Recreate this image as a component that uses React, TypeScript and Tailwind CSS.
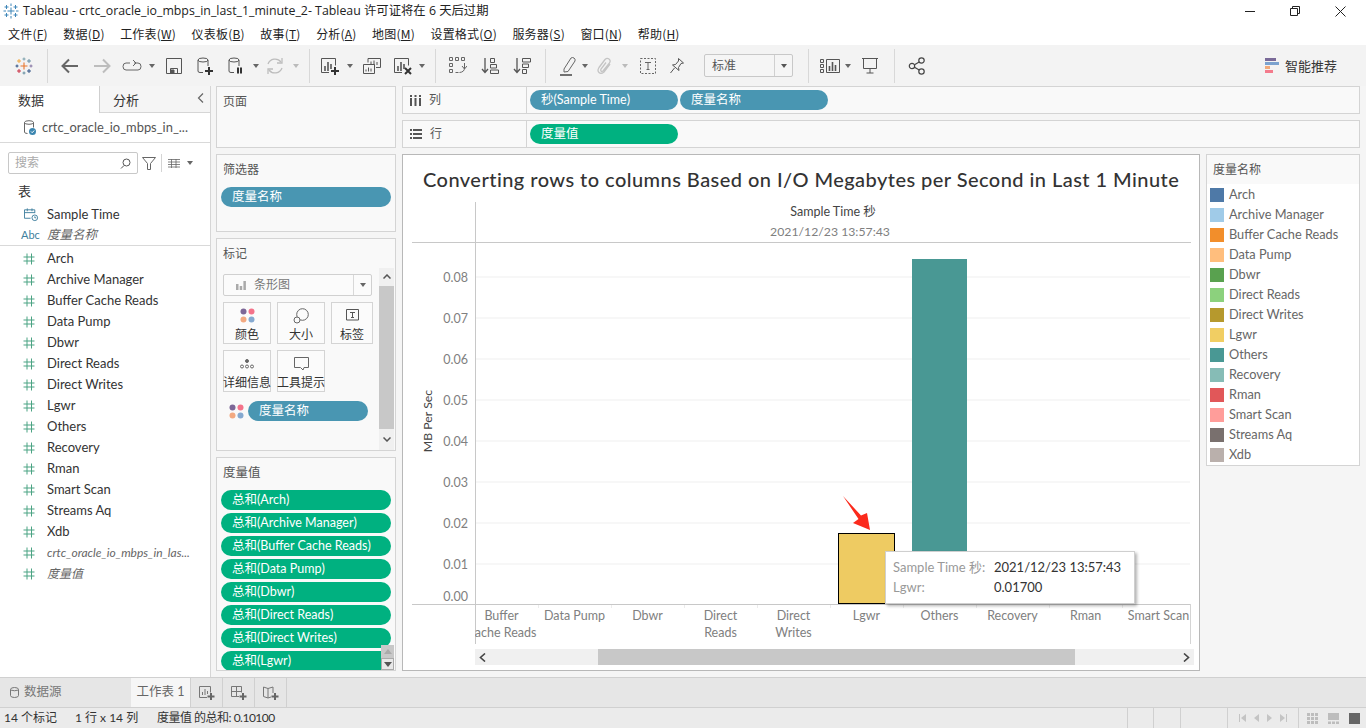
import React from "react";

const Caret = ({ c = "#666", className = "" }: { c?: string; className?: string }) => (
  <svg width="6" height="4" viewBox="0 0 6 4" className={className}><path d="M0 0h6L3 4z" fill={c} /></svg>
);
const Sep = ({ className = "" }: { className?: string }) => <div className={"w-px h-[34px] bg-[#d8d8d8] " + className} />;

const Plus = ({ x, y, c = "#333" }: { x: number; y: number; c?: string }) => (
  <path d={`M${x - 4} ${y}h8M${x} ${y - 4}v8`} stroke={c} strokeWidth="2" fill="none" />
);

const Logo = () => (
  <svg width="18" height="18" viewBox="0 0 18 18" fill="none" strokeWidth=".9">
    <path d="M9 5.500v7M5.500 9h7" stroke="#e8762d" strokeWidth="1.100" />
    <path d="M4 2v4M2 4h4" stroke="#f0a030" />
    <path d="M14 2v4M12 4h4" stroke="#5b879b" />
    <path d="M4 12v4M2 14h4" stroke="#c72035" />
    <path d="M14 12v4M12 14h4" stroke="#1f457e" />
    <path d="M9 .5v3M7.500 2h3" stroke="#7099a6" />
    <path d="M9 14.500v3M7.500 16h3" stroke="#59879b" />
    <path d="M.5 9h3M2 7.500v3" stroke="#1f447e" />
    <path d="M14.500 9h3M16 7.500v3" stroke="#7c6a9c" />
  </svg>
);

const TitleIcon = () => (
  <svg width="16" height="16" viewBox="0 0 16 16" fill="none" stroke="#3f86b8" strokeWidth="1">
    <path d="M8 4.500v7M4.500 8h7M3.500 2v4M1.500 4h4M12.500 2v4M10.500 4h4M3.500 10v4M1.500 12h4M12.500 10v4M10.500 12h4M8 .5v2.500M8 13v2.500M.5 8h2.500M13 8h2.500" />
  </svg>
);

const Ds = ({ extra }: { extra: React.ReactNode }) => (
  <svg width="18" height="18" viewBox="0 0 18 18" fill="none" stroke="#555" strokeWidth="1">
    <ellipse cx="7" cy="3" rx="5" ry="2" />
    <path d="M2 3v11q0 1.500 2 1.500h3M12 3v6" />
    {extra}
  </svg>
);

const Chart = ({ extra, w = 20 }: { extra: React.ReactNode; w?: number }) => (
  <svg width={w} height="18" viewBox={`0 0 ${w} 18`} fill="none" stroke="#555" strokeWidth="1">
    <path d="M9 15.500H1.500v-14h14v7" />
    <path d="M5 14V9M8 14V5M11 12V7" strokeWidth="1.600" />
    {extra}
  </svg>
);

const SheetPlusIcon = ({ kind }: { kind: "sheet" | "dash" | "story" }) => (
  <svg width="16" height="16" viewBox="0 0 16 16" fill="none" stroke="#777" strokeWidth="1">
    {kind === "sheet" && <path d="M8 12.500H.5v-11h11v6M3.500 10V7M6 10V4M8.500 9V6" />}
    {kind === "dash" && <path d="M8 11.500H.5v-10h10v6M5.500 1.500v10M.5 6.500h10" />}
    {kind === "story" && <path d="M8 12L5 13 .5 11.500V2L5 3.500 10 2v6M5 3.500V13" />}
    <path d="M12 8v7M8.500 11.500h7" stroke="#666" strokeWidth="2" />
  </svg>
);

const Toolbar = () => (
  <div className="h-[41px] bg-[#f3f3f3] flex items-center shrink-0">
    <div className="w-[47px] flex justify-center"><Logo /></div>
    <Sep />
    <svg className="ml-[12px]" width="20" height="18" viewBox="0 0 20 18" fill="none" stroke="#666" strokeWidth="2"><path d="M18 9H3M9 2.500L2.500 9 9 15.500" /></svg>
    <svg className="ml-[12px]" width="20" height="18" viewBox="0 0 20 18" fill="none" stroke="#bdbdbd" strokeWidth="2"><path d="M2 9h15M11 2.500L17.500 9 11 15.500" /></svg>
    <svg className="ml-[10px]" width="20" height="14" viewBox="0 0 20 14" fill="none" stroke="#666" strokeWidth="1"><path d="M8 4H4q-3 0-3 3.500T4 11h12q3 0 3-3.500T16 4h-4" /><path d="M11 1l3 3-3 3" /></svg>
    <Caret className="ml-[7px]" />
    <svg className="ml-[11px]" width="16" height="16" viewBox="0 0 16 16" fill="none" stroke="#555"><path d="M.5.5h15v15H.5zM4.500 15.500v-5h7v5" /><path d="M5 12h3v3H5z" fill="#555" /></svg>
    <div className="ml-[14px]"><Ds extra={<Plus x={13} y={14} />} /></div>
    <div className="ml-[13px]"><Ds extra={<path d="M11 10.500v6M14 10.500v6" stroke="#333" strokeWidth="2" />} /></div>
    <Caret className="ml-[8px]" />
    <svg className="ml-[7px]" width="18" height="18" viewBox="0 0 18 18" fill="none" stroke="#bdbdbd" strokeWidth="1.300"><path d="M2 7a7.500 7.500 0 0 1 13-2M16 11a7.500 7.500 0 0 1-13 2" /><path d="M16 1v5h-5M2 17v-5h5" /></svg>
    <Caret c="#bbb" className="ml-[9px]" />
    <Sep className="ml-[10px]" />
    <div className="ml-[10px]"><Chart extra={<Plus x={15} y={14} />} /></div>
    <Caret className="ml-[7px]" />
    <svg className="ml-[10px]" width="18" height="16" viewBox="0 0 18 16" fill="none" stroke="#555"><path d="M5 4.500V.5h12.500v9H13M.5 6.500h11v9H.5zM8 7V3.500M11 7V2.500M14 7V4M3 13.500v-2M5.500 13.500v-4M8 13.500v-3" /></svg>
    <div className="ml-[12px]"><Chart extra={<path d="M12 11l6 6M18 11l-6 6" stroke="#333" strokeWidth="2" />} /></div>
    <Caret className="ml-[6px]" />
    <Sep className="ml-[10px]" />
    <svg className="ml-[13px]" width="18" height="18" viewBox="0 0 18 18" fill="none" stroke="#666"><path d="M.5.5h3v3h-3zM6.500.5h3v3h-3zM12.500.5h3v3h-3zM.5 6.500h3v3h-3zM.5 12.500h3v3h-3zM6.500 15.500h3M15.500 6v5q0 4-5 4.500" /><path d="M13 9l2.500 3L18 9" /></svg>
    <svg className="ml-[14px]" width="18" height="18" viewBox="0 0 18 18" fill="none" stroke="#555"><path d="M4 1v14M1 12l3 3.500L7 12" strokeWidth="1.300" /><path d="M9.500 1.500h4v4h-4zM9.500 7.500h6v3.500h-6zM9.500 13h8v3.500h-8z" /></svg>
    <svg className="ml-[14px]" width="18" height="18" viewBox="0 0 18 18" fill="none" stroke="#555"><path d="M4 1v14M1 12l3 3.500L7 12" strokeWidth="1.300" /><path d="M9.500 1.500h8v3.500h-8zM9.500 7h6v3.500h-6zM9.500 12.500h4v4h-4z" /></svg>
    <Sep className="ml-[14px]" />
    <svg className="ml-[13px]" width="18" height="20" viewBox="0 0 18 20" fill="none" stroke="#666"><path d="M5 13l7-11q1.500-1 3 0t1 3L9 15.500 5 16z" /><path d="M1 19h12" strokeWidth="1.500" stroke="#444" /></svg>
    <Caret className="ml-[5px]" />
    <svg className="ml-[9px]" width="16" height="18" viewBox="0 0 16 18" fill="none" stroke="#c4c4c4" strokeWidth="1.300"><path d="M13 7l-6 8q-3 2.500-5 .5t0-5l6-8q2-2 4-.5t.5 4L6 14q-1.500 1-2 0t0-2l5-6.500" /></svg>
    <Caret c="#bbb" className="ml-[9px]" />
    <svg className="ml-[12px]" width="16" height="16" viewBox="0 0 16 16" fill="none" stroke="#666"><path d="M.5.5h15v15H.5z" strokeDasharray="2 1.500" /><path d="M5 4.500h6M8 4.500v7M6.500 11.500h3" /></svg>
    <svg className="ml-[13px]" width="16" height="17" viewBox="0 0 16 17" fill="none" stroke="#555"><path d="M9.500 1.500l5 4.500-2.500.5-2.500 4 .5 3-6.500-5.500 3-.5 3-3.500zM5.500 11l-4 5" /></svg>
    <div className="ml-[19px] w-[89px] h-[23px] bg-[#f5f5f5] border border-[#c8c8c8] rounded-[2px] flex items-center text-[12px] text-[#555]">
      <span className="pl-[7px] pt-[1px] flex-1">标准</span>
      <span className="w-[18px] h-full border-l border-[#d0d0d0] flex items-center justify-center"><Caret c="#555" /></span>
    </div>
    <Sep className="ml-[15px]" />
    <svg className="ml-[11px]" width="20" height="16" viewBox="0 0 20 16" fill="none" stroke="#555"><path d="M.5 1.500h3v3h-3zM.5 6.500h3v3h-3zM.5 11.500h3v3h-3zM6.500 1.500h13v13h-13z" /><path d="M9.500 13V8M12.500 13V4M15.500 13V7" strokeWidth="1.600" /></svg>
    <Caret className="ml-[5px]" />
    <svg className="ml-[10px]" width="18" height="17" viewBox="0 0 18 17" fill="none" stroke="#555"><path d="M1 1.500h16M2.500 1.500v10h13v-10M9 11.500v4.500M5.500 16h7" /></svg>
    <Sep className="ml-[15px]" />
    <svg className="ml-[13px]" width="18" height="18" viewBox="0 0 18 18" fill="none" stroke="#444" strokeWidth="1.200"><circle cx="13.500" cy="3.500" r="2.700" /><circle cx="13.500" cy="14.500" r="2.700" /><circle cx="4" cy="9" r="2.700" /><path d="M6.500 7.700l4.700-2.800M6.500 10.300l4.700 2.800" /></svg>
    <div className="ml-auto mr-[29px] flex items-center gap-[6px] text-[13px] text-[#333]">
      <svg width="14" height="15" viewBox="0 0 14 15"><path d="M0 0h11v3H0z" fill="#7a6a98" /><path d="M0 4h14v3H0z" fill="#7ba2cf" /><path d="M0 8h5v3H0z" fill="#f1a97a" /><path d="M0 12h8v3H0z" fill="#f47b8c" /></svg>
      <span className="pt-[2px]">智能推荐</span>
    </div>
  </div>
);

const Hash = () => (
  <svg width="12" height="12" viewBox="0 0 12 12" fill="none" stroke="#4ba383"><path d="M4 .5v11M8.500.5v11M.5 4h11M.5 8h11" /></svg>
);

const fields = ["Arch", "Archive Manager", "Buffer Cache Reads", "Data Pump", "Dbwr", "Direct Reads", "Direct Writes", "Lgwr", "Others", "Recovery", "Rman", "Smart Scan", "Streams Aq", "Xdb"];

const LeftPanel = () => (
  <div className="w-[211px] shrink-0 bg-white border-r border-[#d6d6d6] text-[13px] text-[#333]">
    <div className="flex h-[27px] text-[13px]">
      <div className="w-[100px] border-r border-[#cfcfcf] bg-white pl-[18px] pt-[5px]">数据</div>
      <div className="flex-1 bg-[#f5f5f5] border-b border-[#d6d6d6] pl-[13px] pt-[5px] flex justify-between pr-[6px]">
        <span>分析</span>
        <svg className="mt-[2px]" width="7" height="10" viewBox="0 0 7 10" fill="none" stroke="#666" strokeWidth="1.200"><path d="M6 .5L1.500 5 6 9.500" /></svg>
      </div>
    </div>
    <div className="h-[30px] border-b border-[#d9d9d9] flex items-center pl-[23px] gap-[6px] text-[#555] text-[12.900px]">
      <svg width="13" height="15" viewBox="0 0 13 15"><g fill="none" stroke="#666"><ellipse cx="6" cy="2.500" rx="4.500" ry="1.800" /><path d="M1.500 2.500v9.500q0 1.500 3 1.500M10.500 2.500v5" /></g><circle cx="9.500" cy="11.500" r="3.500" fill="#3b86b0" /><path d="M8 11.500l1.200 1.200 2-2.200" stroke="#fff" fill="none" /></svg>
      <span>crtc_oracle_io_mbps_in_...</span>
    </div>
    <div className="flex items-center pt-[9px] pl-[8px]">
      <div className="w-[130px] h-[22px] border border-[#c8c8c8] rounded-[2px] flex items-center justify-between pl-[6px] pr-[6px] text-[#aaa] text-[12px]">
        <span>搜索</span>
        <svg width="11" height="11" viewBox="0 0 11 11" fill="none" stroke="#555"><circle cx="6.500" cy="4.500" r="3.500" /><path d="M4 7.500L1 10.500" /></svg>
      </div>
      <svg className="ml-[4px]" width="14" height="13" viewBox="0 0 14 13" fill="none" stroke="#666"><path d="M.5.5h13L8.500 6.500v6h-3v-6z" /></svg>
      <div className="w-px h-[18px] bg-[#d4d4d4] ml-[5px]" />
      <svg className="ml-[6px]" width="12" height="9" viewBox="0 0 12 9" fill="none" stroke="#666"><path d="M0 .5h12M0 3h12M0 5.500h12M0 8h12M3.500 0v9M8 0v9" strokeWidth=".8" /></svg>
      <Caret className="ml-[7px]" />
    </div>
    <div className="pl-[18px] pt-[8px] pb-[2px] h-[30px]">表</div>
    <div className="flex items-center h-[21px] pl-[24px]">
      <svg className="mr-[8px]" width="15" height="15" viewBox="0 0 16 15" fill="none" stroke="#3f7f9e"><path d="M7 11.500H.5v-9h11V6M.5 5.500h11M3.500 1v3M8.500 1v3" /><circle cx="11.500" cy="11" r="3" /><path d="M11.500 9.500V11h1.500" /></svg>
      <span>Sample Time</span>
    </div>
    <div className="flex items-center h-[21px] pl-[21px] border-b border-[#d9d9d9] ml-0">
      <span className="w-[26px] text-[11px] text-[#3f7f9e]">Abc</span>
      <span className="italic text-[#666] text-[12.500px]">度量名称</span>
    </div>
    <div className="pt-[2px]">
      {fields.map((f) => (
        <div key={f} className="flex items-center h-[21px] pl-[23px] gap-[12px]"><Hash /><span>{f}</span></div>
      ))}
      <div className="flex items-center h-[21px] pl-[23px] gap-[12px]"><Hash /><span className="italic text-[#666] text-[12px]">crtc_oracle_io_mbps_in_las...</span></div>
      <div className="flex items-center h-[21px] pl-[23px] gap-[12px]"><Hash /><span className="italic text-[#666] text-[12px]">度量值</span></div>
    </div>
  </div>
);

const Pill = ({ children, green, className = "" }: { children: React.ReactNode; green?: boolean; className?: string }) => (
  <div className={"h-[20px] rounded-full text-white text-[12.500px] leading-[20px] pl-[11px] whitespace-nowrap " + (green ? "bg-[#00b180] " : "bg-[#4996b2] ") + className}>{children}</div>
);

const Card = ({ children, className = "" }: { children: React.ReactNode; className?: string }) => (
  <div className={"bg-[#f9f9f9] border border-[#d4d4d4] " + className}>{children}</div>
);

const MarkBtn = ({ icon, label, w = "w-[48px]" }: { icon: React.ReactNode; label: string; w?: string }) => (
  <div className={w + " h-[42px] border border-[#d4d4d4] flex flex-col items-center justify-between pt-[5px] text-[12px] leading-[16px] text-[#333] whitespace-nowrap bg-[#fbfbfb]"}>
    <div className="h-[15px] flex items-center">{icon}</div>
    <span>{label}</span>
  </div>
);

const Dots = () => (
  <svg width="15" height="15" viewBox="0 0 15 15"><circle cx="3.500" cy="3.500" r="3" fill="#7d6797" /><circle cx="11.500" cy="3.500" r="3" fill="#f4738a" /><circle cx="3.500" cy="11.500" r="3" fill="#f2a981" /><circle cx="11.500" cy="11.500" r="3" fill="#85a9d0" /></svg>
);

const MiddlePanel = () => (
  <div className="w-[180px] ml-[5px] shrink-0 flex flex-col gap-[6px] text-[12px] text-[#555]">
    <Card className="h-[62px] pl-[6px] pt-[6px]">页面</Card>
    <Card className="h-[78px] px-[4px]">
      <div className="pl-[2px] pt-[6px] h-[32px]">筛选器</div>
      <Pill>度量名称</Pill>
    </Card>
    <Card className="h-[213px] flex flex-col">
      <div className="pl-[6px] pt-[6px] h-[29px] shrink-0">标记</div>
      <div className="flex flex-1">
        <div className="w-[162px] pl-[6px]">
          <div className="w-[149px] h-[22px] mt-[6px] border border-[#d0d0d0] rounded-[2px] bg-[#fbfbfb] flex items-center">
            <svg className="ml-[12px]" width="10" height="10" viewBox="0 0 10 10" fill="#aaa"><path d="M0 4h2.500v6H0zM3.700 6h2.500v4H3.700zM7.400 1h2.500v9H7.400z" /></svg>
            <span className="ml-[8px] flex-1 text-[#777]">条形图</span>
            <span className="w-[18px] h-full border-l border-[#d8d8d8] flex items-center justify-center"><Caret /></span>
          </div>
          <div className="flex gap-[6px] mt-[6px]">
            <MarkBtn label="颜色" icon={<Dots />} />
            <MarkBtn label="大小" icon={<svg width="16" height="16" viewBox="0 0 16 16" fill="none" stroke="#666"><circle cx="9.500" cy="6.500" r="5.800" /><circle cx="4" cy="12" r="3" fill="#fbfbfb" /></svg>} />
            <MarkBtn w="w-[42px]" label="标签" icon={<svg width="13" height="13" viewBox="0 0 13 13" fill="none" stroke="#555"><path d="M.5.5h12v10.500H.5zM4 3.500h5M6.500 3.500v5M5 8.500h3" /></svg>} />
          </div>
          <div className="flex gap-[6px] mt-[6px]">
            <MarkBtn label="详细信息" icon={<svg width="14" height="10" viewBox="0 0 14 10" fill="none" stroke="#666"><circle cx="7" cy="2" r="1.500" fill="#666" /><circle cx="2" cy="7.500" r="1.500" /><circle cx="7" cy="7.500" r="1.500" /><circle cx="12" cy="7.500" r="1.500" /></svg>} />
            <MarkBtn label="工具提示" icon={<svg width="15" height="14" viewBox="0 0 15 14" fill="none" stroke="#666"><path d="M.5.5h14v10H10L9 13l-2.500-2.500H.5z" /></svg>} />
          </div>
          <div className="flex items-center mt-[9px] pl-[6px] gap-[4px]">
            <Dots />
            <Pill className="w-[120px]">度量名称</Pill>
          </div>
        </div>
        <div className="w-[15px] mt-[0px] bg-[#f0f0f0] flex flex-col items-center justify-between">
          <div className="h-[17px] w-full flex items-center justify-center">
            <svg width="8" height="5" viewBox="0 0 8 5" fill="none" stroke="#555" strokeWidth="1.500"><path d="M.5 4.500L4 1l3.500 3.500" /></svg>
          </div>
          <div className="h-[143px] w-full bg-[#c8c8c8]" />
          <div className="h-[21px] w-full flex items-center justify-center">
            <svg width="8" height="5" viewBox="0 0 8 5" fill="none" stroke="#555" strokeWidth="1.500"><path d="M.5.5L4 4l3.500-3.500" /></svg>
          </div>
        </div>
      </div>
    </Card>
    <Card className="h-[214px] relative overflow-hidden px-[4px]">
      <div className="pl-[2px] pt-[6px] h-[32px] text-[12.500px]">度量值</div>
      <div className="flex flex-col gap-[3px]">
        {["Arch", "Archive Manager", "Buffer Cache Reads", "Data Pump", "Dbwr", "Direct Reads", "Direct Writes", "Lgwr"].map((n) => (
          <Pill green key={n}>总和({n})</Pill>
        ))}
      </div>
      <div className="absolute right-[1px] bottom-0 w-[13px] h-[25px] bg-[#c8c8c8] flex flex-col">
        <div className="h-[13px] flex items-center justify-center"><svg width="8" height="5" viewBox="0 0 8 5"><path d="M0 5h8L4 0z" fill="#aaa" /></svg></div>
        <div className="h-[12px] bg-[#e8e8e8] border border-[#aaa] flex items-center justify-center"><svg width="8" height="5" viewBox="0 0 8 5"><path d="M0 0h8L4 5z" fill="#555" /></svg></div>
      </div>
    </Card>
  </div>
);

const Shelf = ({ icon, label, children }: { icon: React.ReactNode; label: string; children: React.ReactNode }) => (
  <Card className="h-[28px] flex text-[12px] text-[#555]">
    <div className="w-[124px] border-r border-[#d4d4d4] flex items-center pl-[7px] gap-[8px]">{icon}<span>{label}</span></div>
    <div className="flex items-center pl-[3px] gap-[2px]">{children}</div>
  </Card>
);

const xLabels: [number, string, string?][] = [
  [501.5, "Buffer", "Cache Reads"], [574.5, "Data Pump"], [647.5, "Dbwr"], [720.5, "Direct", "Reads"], [793.5, "Direct", "Writes"],
  [866.5, "Lgwr"], [939.5, "Others"], [1012.5, "Recovery"], [1085.5, "Rman"], [1158.5, "Smart Scan"],
];
const yTicks: [number, string][] = [[277, "0.08"], [318, "0.07"], [359, "0.06"], [400, "0.05"], [441, "0.04"], [482, "0.03"], [523, "0.02"], [564, "0.01"]];

const Plot = () => (
  <svg width="796" height="442" viewBox="403 202 796 442" className="block" fontFamily="Lato, 'Noto Sans CJK SC', sans-serif" fontSize="12.5">
    <defs><clipPath id="xclip"><rect x="475" y="604" width="716" height="40" /></clipPath></defs>
    {yTicks.map(([y, t]) => (
      <g key={t}>
        <line x1="476" x2="1190" y1={y} y2={y} stroke="#efefef" />
        <text x="468" y={y + 4.500} textAnchor="end" fill="#808080">{t}</text>
      </g>
    ))}
    <text x="468" y="601" textAnchor="end" fill="#808080">0.00</text>
    <text transform="translate(432 421) rotate(-90)" textAnchor="middle" fill="#444" fontSize="12.3">MB Per Sec</text>
    <text x="833" y="216" textAnchor="middle" fill="#444" fontSize="12.5">Sample Time 秒</text>
    <text x="830" y="236" textAnchor="middle" fill="#808080" fontSize="12.25">2021/12/23 13:57:43</text>
    <rect x="912" y="259" width="55" height="345" fill="#499894" />
    <rect x="838.5" y="533.5" width="56" height="70" fill="#eecb62" stroke="#000" />
    <line x1="412" x2="1191" y1="242.500" y2="242.500" stroke="#c8c8c8" />
    <line x1="412" x2="1191" y1="604.500" y2="604.500" stroke="#c8c8c8" />
    <line x1="475.500" x2="475.500" y1="202" y2="644" stroke="#c8c8c8" />
    <line x1="1190.500" x2="1190.500" y1="604" y2="644" stroke="#d4d4d4" />
    {[538, 611, 684, 757, 830, 903, 976, 1049, 1122].map((x) => (
      <line key={x} x1={x + 0.5} x2={x + 0.5} y1="605" y2="608" stroke="#ececec" />
    ))}
    <g clipPath="url(#xclip)" fill="#808080">
      {xLabels.map(([x, a, b]) => (
        <g key={x}>
          <text x={x} y="620" textAnchor="middle">{a}</text>
          {b && <text x={x} y="637" textAnchor="middle">{b}</text>}
        </g>
      ))}
    </g>
  </svg>
);

const ChartCard = () => (
  <div className="relative w-[798px] h-[517px] bg-white border border-[#b8b8b8] shrink-0 overflow-hidden font-['Lato','Noto_Sans_CJK_SC',sans-serif]">
    <div className="h-[47px] pl-[20px] pt-[11px] text-[20px] leading-[26px] text-[#333] font-medium tracking-[0.45px] whitespace-nowrap">
      Converting rows to columns Based on I/O Megabytes per Second in Last 1 Minute
    </div>
    <Plot />
    <div className="mt-[5px] ml-[72px] w-[719px] h-[16px] bg-[#f0f0f0] flex items-center">
      <div className="w-[123px] pl-[4px] flex items-center">
        <svg width="7" height="9" viewBox="0 0 7 9" fill="none" stroke="#444" strokeWidth="1.600"><path d="M6 .5L1.500 4.500 6 8.500" /></svg>
      </div>
      <div className="w-[477px] h-full bg-[#c8c8c8]" />
      <div className="flex-1 flex justify-end pr-[4px]">
        <svg width="7" height="9" viewBox="0 0 7 9" fill="none" stroke="#444" strokeWidth="1.600"><path d="M1 .5l4.500 4L1 8.500" /></svg>
      </div>
    </div>
    <svg className="absolute left-[440px] top-[341px]" width="28" height="35" viewBox="843 496 28 35">
      <path d="M843 496L861 515.500 867 513 870 530 853 523 858.500 519z" fill="#fb2a1c" />
    </svg>
    <div className="absolute left-[482px] top-[396px] w-[250px] h-[53px] bg-white border border-[#cfcfcf] shadow-[2px_2px_3px_rgba(0,0,0,0.3)] pl-[7px] pt-[5px] text-[13px] leading-[20px] text-[#333]">
      <div className="flex"><span className="w-[101px] text-[#999] whitespace-nowrap">Sample Time 秒:</span><span className="whitespace-nowrap">2021/12/23 13:57:43</span></div>
      <div className="flex"><span className="w-[101px] text-[#999]">Lgwr:</span><span>0.01700</span></div>
    </div>
  </div>
);

const legend: [string, string][] = [
  ["Arch", "#4e79a7"], ["Archive Manager", "#a0cbe8"], ["Buffer Cache Reads", "#f28e2b"], ["Data Pump", "#ffbe7d"], ["Dbwr", "#59a14f"],
  ["Direct Reads", "#8cd17d"], ["Direct Writes", "#b6992d"], ["Lgwr", "#f1ce63"], ["Others", "#499894"], ["Recovery", "#86bcb6"],
  ["Rman", "#e15759"], ["Smart Scan", "#ff9d9a"], ["Streams Aq", "#79706e"], ["Xdb", "#bab0ac"],
];

const Legend = () => (
  <div className="w-[154px] h-[312px] bg-white border border-[#d4d4d4]">
    <div className="h-[29px] bg-[#f9f9f9] pl-[6px] pt-[6px] text-[12px] text-[#555]">度量名称</div>
    <div className="pl-[3px] pt-[1px]">
      {legend.map(([n, c]) => (
        <div key={n} className="flex items-center h-[20px] gap-[5px] text-[12.750px] text-[#666]">
          <svg width="14" height="14" viewBox="0 0 14 14" className="shrink-0"><rect width="14" height="14" fill={c} /></svg>
          <span>{n}</span>
        </div>
      ))}
    </div>
  </div>
);

const menus: [string, string][] = [["文件", "F"], ["数据", "D"], ["工作表", "W"], ["仪表板", "B"], ["故事", "T"], ["分析", "A"], ["地图", "M"], ["设置格式", "O"], ["服务器", "S"], ["窗口", "N"], ["帮助", "H"]];

export default function App() {
  return (
    <div className="w-[1366px] h-[728px] overflow-hidden flex flex-col bg-[#f5f5f5] font-['Lato','Noto_Sans_CJK_SC',sans-serif]">
      <div className="h-[22px] bg-white flex items-center shrink-0 text-[12.350px] text-[#222] font-['Open_Sans','Noto_Sans_CJK_SC',sans-serif]">
        <div className="ml-[3px] mr-[4px] flex"><TitleIcon /></div>
        <span className="whitespace-nowrap">Tableau - crtc_oracle_io_mbps_in_last_1_minute_2- Tableau 许可证将在 6 天后过期</span>
        <div className="ml-auto flex items-center gap-[35px] mr-[20px]">
          <svg width="10" height="10" viewBox="0 0 10 10" stroke="#222" fill="none"><path d="M0 5.500h10" /></svg>
          <svg width="10" height="10" viewBox="0 0 10 10" stroke="#222" fill="none"><path d="M.5 2.500h7v7h-7zM2.500 2.500V.5h7v7h-2" /></svg>
          <svg width="11" height="11" viewBox="0 0 11 11" stroke="#222" fill="none"><path d="M.5.5l10 10M10.500.5l-10 10" /></svg>
        </div>
      </div>
      <div className="h-[23px] bg-white flex items-center gap-[15.500px] pl-[8px] shrink-0 text-[12px] tracking-[0.2px] text-[#222] font-['Noto_Sans_CJK_SC',sans-serif]">
        {menus.map(([m, k]) => <span key={m}>{m}(<span className="underline">{k}</span>)</span>)}
      </div>
      <Toolbar />
      <div className="h-[591px] flex">
        <LeftPanel />
        <MiddlePanel />
        <div className="ml-[6px] w-[958px] flex flex-col gap-[6px]">
          <Shelf label="列" icon={<svg width="11" height="11" viewBox="0 0 11 11" fill="#555"><path d="M0 0h2v2H0zM0 3h2v8H0zM4.500 0h2v2h-2zM4.500 3h2v8h-2zM9 0h2v2H9zM9 3h2v8H9z" /></svg>}>
            <Pill className="w-[148px]">秒(Sample Time)</Pill>
            <Pill className="w-[148px]">度量名称</Pill>
          </Shelf>
          <Shelf label="行" icon={<svg width="12" height="10" viewBox="0 0 12 10" fill="#555"><path d="M0 0h2v2H0zM3 0h9v2H3zM0 4h2v2H0zM3 4h9v2H3zM0 8h2v2H0zM3 8h9v2H3z" /></svg>}>
            <Pill green className="w-[148px]">度量值</Pill>
          </Shelf>
          <div className="flex gap-[6px]">
            <ChartCard />
            <Legend />
          </div>
        </div>
      </div>
      <div className="h-[30px] bg-[#e6e6e6] border-t border-[#d0d0d0] flex items-stretch shrink-0 text-[12.500px] text-[#777]">
        <div className="w-[131px] flex items-center pl-[10px] gap-[5px]">
          <svg width="9" height="11" viewBox="0 0 9 11" fill="none" stroke="#777"><path d="M.5 2.500q0-2 4-2t4 2v6q0 2-4 2t-4-2zM.5 3q4 1.500 8 0" /></svg>
          <span>数据源</span>
        </div>
        <div className="w-[60px] bg-[#f6f6f6] flex items-center justify-center text-[#666] border-r border-[#d0d0d0]">工作表 1</div>
        <div className="w-[32px] border-r border-[#d0d0d0] flex items-center justify-center"><SheetPlusIcon kind="sheet" /></div>
        <div className="w-[32px] border-r border-[#d0d0d0] flex items-center justify-center"><SheetPlusIcon kind="dash" /></div>
        <div className="w-[32px] border-r border-[#d0d0d0] flex items-center justify-center"><SheetPlusIcon kind="story" /></div>
      </div>
      <div className="h-[21px] bg-[#ebebeb] border-t border-[#d0d0d0] flex items-center shrink-0 text-[12px] text-[#333]">
        <span className="w-[75px] pl-[4px]">14 个标记</span>
        <span className="w-[82px]">1 行 x 14 列</span>
        <span className="tracking-[-0.5px]">度量值 的总和: 0.10100</span>
        <div className="ml-auto flex items-stretch h-full">
          <div className="w-[26px] border-l border-[#d0d0d0]" />
          <div className="w-[27px] border-l border-[#d0d0d0]" />
          <div className="w-[47px] border-l border-[#d0d0d0]" />
          <div className="w-[71px] border-l border-[#d0d0d0] flex items-center justify-center gap-[8px]">
            <svg width="7" height="8" viewBox="0 0 7 8" fill="#c4c4c4"><path d="M0 0h1v8H0zM7 0v8L2 4z" /></svg>
            <svg width="5" height="8" viewBox="0 0 5 8" fill="#c4c4c4"><path d="M5 0v8L0 4z" /></svg>
            <svg width="5" height="8" viewBox="0 0 5 8" fill="#c4c4c4"><path d="M0 0v8l5-4z" /></svg>
            <svg width="7" height="8" viewBox="0 0 7 8" fill="#c4c4c4"><path d="M6 0h1v8H6zM0 0v8l5-4z" /></svg>
          </div>
          <div className="w-[68px] border-l border-[#d0d0d0] flex items-center pl-[8px] gap-[10px]">
            <svg width="11" height="11" viewBox="0 0 11 11" fill="#bdbdbd"><path d="M0 0h3v3H0zM4 0h3v3H4zM8 0h3v3H8zM0 4h3v3H0zM4 4h3v3H4zM8 4h3v3H8zM0 8h3v3H0zM4 8h3v3H4zM8 8h3v3H8z" /></svg>
            <svg width="11" height="11" viewBox="0 0 11 11" fill="#bdbdbd"><path d="M0 0h11v7H0zM0 8.500h3V11H0zM4 8.500h3V11H4zM8 8.500h3V11H8z" /></svg>
            <svg width="11" height="11" viewBox="0 0 11 11" fill="#666"><path d="M0 0h11v11H0z" /></svg>
          </div>
        </div>
      </div>
    </div>
  );
}
